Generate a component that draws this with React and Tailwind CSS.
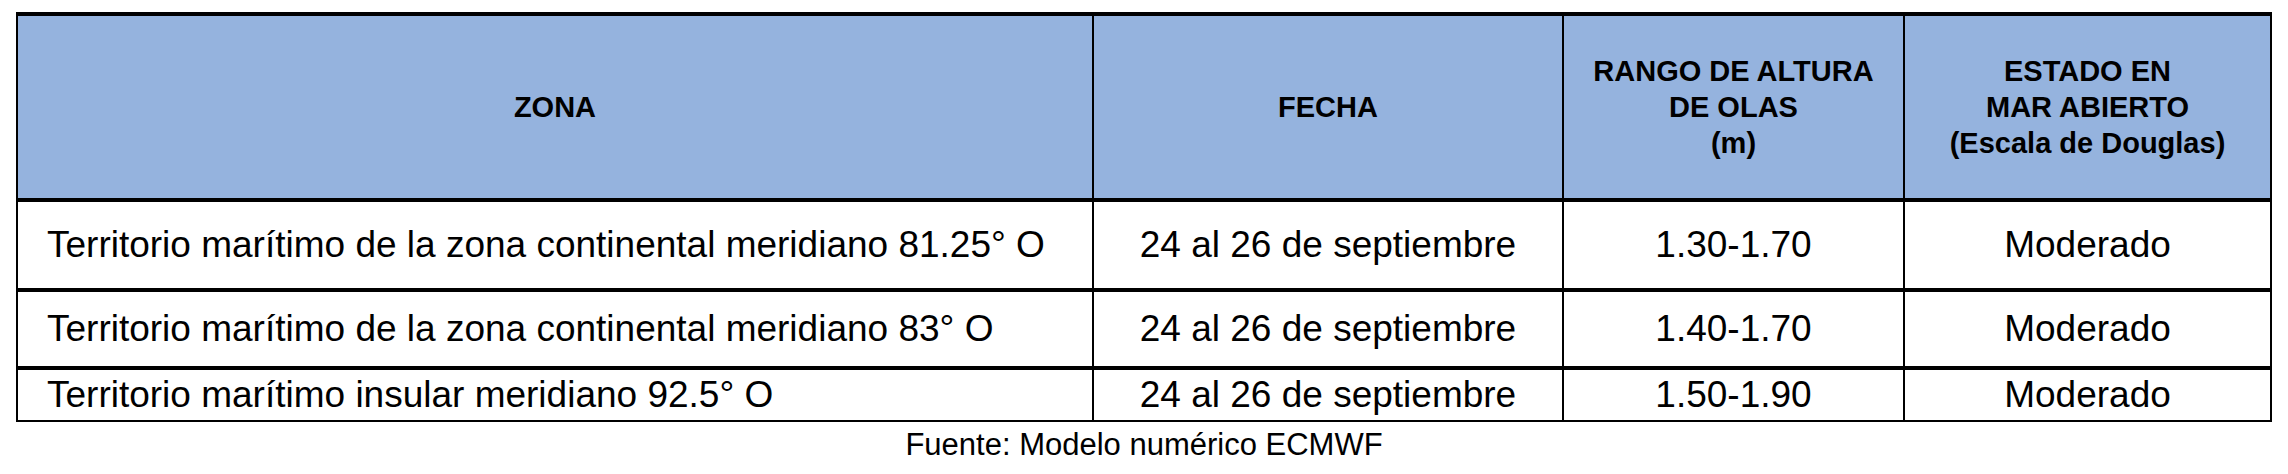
import React from "react";

const rows = [
  {
    zona: "Territorio marítimo de la zona continental meridiano 81.25° O",
    h: "h-[90px]",
    rango: "1.30-1.70",
  },
  {
    zona: "Territorio marítimo de la zona continental meridiano 83° O",
    h: "h-[78px]",
    rango: "1.40-1.70",
  },
  {
    zona: "Territorio marítimo insular meridiano 92.5° O",
    h: "h-[54px]",
    rango: "1.50-1.90",
  },
];

export default function App() {
  return (
    <div
      className="w-[2288px] h-[474px] bg-white text-black pt-[12px] pl-[16px]"
      style={{ fontFamily: '"Liberation Sans", Arial, sans-serif' }}
    >
      <div className="w-[2256px] border-t-4 border-x-2 border-b-2 border-black">
        <div className="flex h-[182px] bg-[#95b3de] font-bold text-[29px] leading-[36px] text-center">
          <div className="w-[1074px] flex items-center justify-center">ZONA</div>
          <div className="w-[470px] border-l-2 border-black flex items-center justify-center">FECHA</div>
          <div className="w-[341px] border-l-2 border-black flex items-center justify-center">
            <div>
              RANGO DE ALTURA
              <br />
              DE OLAS
              <br />
              (m)
            </div>
          </div>
          <div className="w-[367px] border-l-2 border-black flex items-center justify-center">
            <div>
              ESTADO EN
              <br />
              MAR ABIERTO
              <br />
              (Escala de Douglas)
            </div>
          </div>
        </div>
        {rows.map((r) => (
          <div
            key={r.zona}
            className={`flex border-t-4 border-black text-[37px] leading-[42px] ${r.h}`}
          >
            <div className="w-[1074px] flex items-center pl-[29px] whitespace-nowrap">{r.zona}</div>
            <div className="w-[470px] border-l-2 border-black flex items-center justify-center">
              24 al 26 de septiembre
            </div>
            <div className="w-[341px] border-l-2 border-black flex items-center justify-center">
              {r.rango}
            </div>
            <div className="w-[367px] border-l-2 border-black flex items-center justify-center">
              Moderado
            </div>
          </div>
        ))}
      </div>
      <div className="w-[2256px] mt-[5px] text-center text-[31px] leading-[36px]">
        Fuente: Modelo numérico ECMWF
      </div>
    </div>
  );
}
